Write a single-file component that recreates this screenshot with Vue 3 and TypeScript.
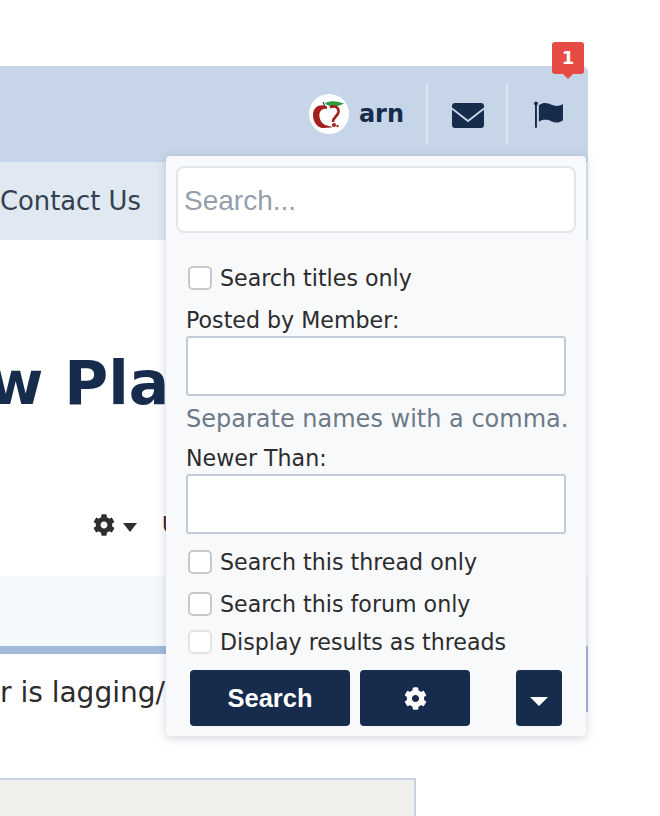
<script setup lang="ts">
const filters = [
  { label: 'Search this thread only', faded: false },
  { label: 'Search this forum only', faded: false },
  { label: 'Display results as threads', faded: true },
]

const cogPath =
  'M487.4 315.7l-42.6-24.6c4.3-23.2 4.3-47 0-70.2l42.6-24.6c4.9-2.8 7.1-8.6 5.5-14-11.1-35.6-30-67.8-54.7-94.6-3.8-4.1-10-5.1-14.8-2.3L380.8 110c-17.9-15.4-38.5-27.3-60.8-35.1V25.8c0-5.6-3.9-10.5-9.4-11.7-36.7-8.2-74.3-7.8-109.2 0-5.5 1.2-9.4 6.1-9.4 11.7V75c-22.2 7.9-42.8 19.8-60.8 35.1L88.7 85.5c-4.9-2.8-11-1.9-14.8 2.3-24.7 26.7-43.6 58.9-54.7 94.6-1.7 5.4.6 11.2 5.5 14L67.3 221c-4.3 23.2-4.3 47 0 70.2l-42.6 24.6c-4.9 2.8-7.1 8.6-5.5 14 11.1 35.6 30 67.8 54.7 94.6 3.8 4.1 10 5.1 14.8 2.3l42.6-24.6c17.9 15.4 38.5 27.3 60.8 35.1v49.2c0 5.6 3.9 10.5 9.4 11.7 36.7 8.2 74.3 7.8 109.2 0 5.5-1.2 9.4-6.1 9.4-11.7v-49.2c22.2-7.9 42.8-19.8 60.8-35.1l42.6 24.6c4.9 2.8 11 1.9 14.8-2.3 24.7-26.7 43.6-58.9 54.7-94.6 1.5-5.5-.7-11.3-5.6-14.1zM256 336c-44.1 0-80-35.9-80-80s35.9-80 80-80 80 35.9 80 80-35.9 80-80 80z'
</script>

<template>
  <div class="page">
    <header class="top-bar">
      <div class="visitor">
        <span class="avatar">
          <svg viewBox="0 0 40 40" width="40" height="40">
            <circle cx="20" cy="20" r="20" fill="#fff" />
            <path d="M16 9 C22 6 29 7 35 9.5 C30 12 25 13 21 12 C19 11.5 17 10.5 16 9Z" fill="#2f9a3e" />
            <path d="M14 8 L16 12" stroke="#27486b" stroke-width="1.2" />
            <path
              d="M18 12.5 C12 9.5 4 12 4 21 C4 29 10 35 15 34 C18 33.5 21 34 24 33 C19 32 13 31 11 25 C9 19 12 14 18 15Z"
              fill="#a3201f"
            />
            <path
              d="M21 13.5 C25 11 30 13 29.5 18 C29 22 24 23 24 28"
              fill="none"
              stroke="#a3201f"
              stroke-width="2.6"
            />
            <circle cx="25" cy="31" r="2" fill="#a3201f" />
            <circle cx="28.5" cy="32" r="1.2" fill="#a3201f" />
          </svg>
        </span>
        <span class="visitor-name">arn</span>
      </div>
      <button class="bar-icon" type="button" aria-label="Inbox">
        <svg class="mail-icon" viewBox="0 0 32 25" width="32" height="25">
          <rect width="32" height="25" rx="3" fill="#172c4c" />
          <path d="M0 5.5 L16 18 L32 5.5" fill="none" stroke="#c6d5e7" stroke-width="1.8" />
        </svg>
      </button>
      <button class="bar-icon" type="button" aria-label="Alerts">
        <svg class="flag-icon" viewBox="0 0 30 28" width="29" height="27">
          <circle cx="2" cy="2.5" r="2" fill="#172c4c" />
          <rect x="1" y="3" width="2" height="25" rx="1" fill="#172c4c" />
          <path
            d="M5 4.5 C10 1 14 2 18 4 C23 6 27 5 30 3 V20 C26 23 22 23 18 21 C13 19 9 19 5 21.5Z"
            fill="#172c4c"
          />
        </svg>
        <span class="badge">1</span>
      </button>
    </header>

    <nav class="sub-nav">Contact Us</nav>

    <h1 class="thread-title">w Pla</h1>

    <div class="tools">
      <svg viewBox="0 0 512 512" width="22" height="22"><path :d="cogPath" fill="#2e2e2e" /></svg>
      <span class="tools-caret"></span>
      <span class="tools-cut">U</span>
    </div>

    <div class="pager-band"></div>

    <div class="post">
      <p class="post-line">r is lagging/</p>
    </div>

    <div class="quote-box"></div>
  </div>

  <form class="search-menu" @submit.prevent>
    <input class="search-field" type="text" placeholder="Search..." />
    <label class="check-row first-check">
      <input type="checkbox" />
      <span>Search titles only</span>
    </label>
    <label class="field-label member-label" for="member">Posted by Member:</label>
    <input id="member" class="text-field" type="text" />
    <p class="hint">Separate names with a comma.</p>
    <label class="field-label newer-label" for="newer">Newer Than:</label>
    <input id="newer" class="text-field" type="text" />
    <div class="filters">
      <label v-for="item in filters" :key="item.label" class="check-row" :class="{ faded: item.faded }">
        <input type="checkbox" />
        <span>{{ item.label }}</span>
      </label>
    </div>
    <div class="actions">
      <button class="action action-search" type="submit">Search</button>
      <button class="action action-cog" type="button" aria-label="Options">
        <svg viewBox="0 0 512 512" width="23" height="23"><path :d="cogPath" fill="#fff" /></svg>
      </button>
      <button class="action action-more" type="button" aria-label="More">
        <span class="more-caret"></span>
      </button>
    </div>
  </form>
</template>

<style>
html,
body {
  background: #fff;
}
</style>

<style scoped>
.page {
  width: 588px;
  height: 816px;
  padding-top: 66px;
  box-sizing: border-box;
  overflow: hidden;
  font-family: "DejaVu Sans", Verdana, sans-serif;
  color: #2c2c2c;
}

.top-bar {
  height: 96px;
  padding-right: 2px;
  box-sizing: border-box;
  display: flex;
  justify-content: flex-end;
  align-items: center;
  background: #c6d5e7;
  border-top-right-radius: 6px;
}

.visitor {
  display: flex;
  align-items: center;
  gap: 10px;
  padding-right: 22px;
}

.avatar {
  display: block;
  width: 40px;
  height: 40px;
}

.visitor-name {
  font-size: 24px;
  font-weight: 700;
  color: #172c4c;
}

.bar-icon {
  position: relative;
  width: 80px;
  height: 60px;
  padding: 0;
  border: 0;
  border-left: 2px solid #dde6f0;
  background: none;
  display: flex;
  align-items: center;
  justify-content: center;
}

.mail-icon {
  margin: 2px 0 0 2px;
}

.flag-icon {
  margin: 0 0 0 3px;
}

.badge {
  position: absolute;
  top: -42px;
  right: 2px;
  width: 32px;
  height: 32px;
  border-radius: 3px;
  background: #e74c44;
  color: #fff;
  font: 700 18px/32px "DejaVu Sans", sans-serif;
  text-align: center;
}

.badge::after {
  content: "";
  position: absolute;
  left: 11px;
  bottom: -5px;
  border-left: 5px solid transparent;
  border-right: 5px solid transparent;
  border-top: 5px solid #e74c44;
}

.sub-nav {
  height: 78px;
  padding-bottom: 1px;
  box-sizing: border-box;
  display: flex;
  align-items: center;
  background: #e0e8f2;
  font-size: 25.8px;
  color: #33404f;
}

.thread-title {
  margin: 107px 0 0 -12px;
  font-size: 60px;
  line-height: 72px;
  font-weight: 700;
  color: #172c4c;
}

.tools {
  height: 24px;
  margin-top: 94px;
  padding-left: 93px;
  display: flex;
  align-items: center;
}

.tools-caret {
  margin: 4px 0 0 8px;
  border-left: 7px solid transparent;
  border-right: 7px solid transparent;
  border-top: 9px solid #2e2e2e;
}

.tools-cut {
  margin-left: 25px;
  font-size: 21px;
  color: #3a2326;
}

.pager-band {
  height: 70px;
  margin-top: 39px;
  background: #f5f8fb;
  border-bottom: 8px solid #a2bbdb;
}

.post {
  height: 58px;
  box-sizing: border-box;
  border-right: 2px solid #a2bbdb;
}

.post-line {
  margin: 0;
  padding-top: 19px;
  font-size: 28px;
  line-height: 40px;
}

.quote-box {
  width: 416px;
  height: 60px;
  margin-top: 66px;
  box-sizing: border-box;
  background: #f0efec;
  border-top: 2px solid #c7d3e3;
  border-right: 2px solid #c7d3e3;
}

.search-menu {
  position: absolute;
  top: 156px;
  left: 166px;
  width: 420px;
  height: 580px;
  padding: 10px 10px 0;
  box-sizing: border-box;
  background: #f8f9fb;
  border-radius: 4px;
  box-shadow: 0 2px 10px rgba(40, 60, 90, 0.22);
  font-family: "DejaVu Sans", Verdana, sans-serif;
  font-size: 22.15px;
  color: #2c2c2c;
}

.search-field {
  display: block;
  width: 400px;
  height: 67px;
  box-sizing: border-box;
  padding: 2px 6px 0;
  border: 2px solid #e2e6ec;
  border-radius: 8px;
  background: #fff;
  outline: none;
  font: 28px "Liberation Sans", Arial, sans-serif;
}

.search-field::placeholder {
  color: #959fab;
  opacity: 1;
}

.check-row {
  display: flex;
  align-items: center;
  gap: 8px;
  margin-left: 12px;
  height: 24px;
  line-height: 24px;
}

.check-row input {
  appearance: none;
  flex: none;
  width: 24px;
  height: 24px;
  margin: 0;
  box-sizing: border-box;
  border: 2px solid #c8c8c8;
  border-radius: 5px;
  background: #fff;
}

.check-row.faded input {
  border-color: #e4e4e4;
}

.first-check {
  margin-top: 33px;
}

.field-label {
  display: block;
  margin-left: 10px;
  line-height: 28px;
}

.member-label {
  margin-top: 16px;
  padding-top: 1px;
  line-height: 27px;
}

.newer-label {
  margin-top: 11px;
}

.text-field {
  display: block;
  width: 380px;
  height: 60px;
  margin: 2px 0 0 10px;
  box-sizing: border-box;
  border: 2px solid #c3cbd9;
  border-radius: 3px;
  background: #fff;
  outline: none;
}

.hint {
  margin: 9px 0 0 10px;
  font-size: 24px;
  line-height: 28px;
  color: #6d7a88;
  white-space: nowrap;
}

.filters {
  margin-top: 16px;
  display: flex;
  flex-direction: column;
}

.filters .check-row:nth-child(2) {
  margin-top: 18px;
}

.filters .check-row:nth-child(3) {
  margin-top: 14px;
}

.actions {
  display: flex;
  margin: 16px 0 0 14px;
}

.action {
  height: 56px;
  padding: 0;
  border: 0;
  border-radius: 4px;
  background: #172c4c;
  color: #fff;
  display: flex;
  align-items: center;
  justify-content: center;
}

.action-search {
  width: 160px;
  font: 700 25.5px "Liberation Sans", Arial, sans-serif;
}

.action-cog {
  width: 110px;
  margin-left: 10px;
}

.action-more {
  width: 46px;
  margin-left: 46px;
}

.more-caret {
  margin-top: 6px;
  border-left: 9px solid transparent;
  border-right: 9px solid transparent;
  border-top: 9px solid #fff;
}
</style>
